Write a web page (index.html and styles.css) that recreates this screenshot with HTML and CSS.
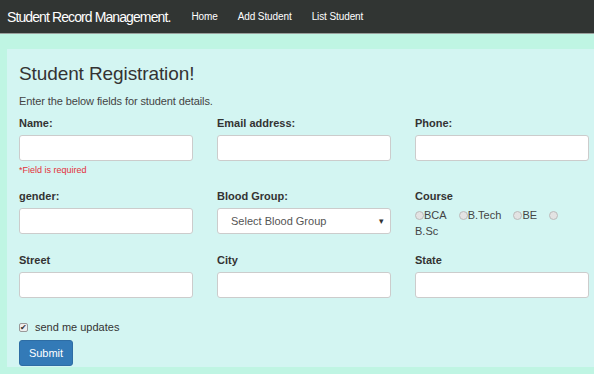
FILE: index.html
```html
<!DOCTYPE html>
<html lang="en">
<head>
    <meta charset="UTF-8">
    <meta name="viewport" content="width=device-width, initial-scale=1.0">
    <title>Student Record Management</title>
    <link rel="stylesheet" href="styles.css">
</head>
<body>
    <!-- Top navigation -->
    <nav class="navbar">
        <a class="brand" href="#">Student Record Management.</a>
        <a class="nav-link" href="#">Home</a>
        <a class="nav-link" href="#">Add Student</a>
        <a class="nav-link" href="#">List Student</a>
    </nav>

    <!-- Registration panel -->
    <div class="panel">
        <h3>Student Registration!</h3>
        <p class="lead">Enter the below fields for student details.</p>
        <form class="reg-form">
            <div class="field">
                <label>Name:</label>
                <input type="text">
                <span class="error">*Field is required</span>
            </div>
            <div class="field">
                <label>Email address:</label>
                <input type="email">
            </div>
            <div class="field">
                <label>Phone:</label>
                <input type="text">
            </div>

            <div class="field">
                <label>gender:</label>
                <input type="text">
            </div>
            <div class="field">
                <label>Blood Group:</label>
                <div class="select">
                    <span>Select Blood Group</span>
                    <span class="caret">&#9662;</span>
                </div>
            </div>
            <div class="field">
                <label>Course</label>
                <div class="radios">
                    <span class="radio"><i></i>BCA</span>
                    <span class="radio"><i></i>B.Tech</span>
                    <span class="radio"><i></i>BE</span>
                    <span class="radio"><i></i><wbr>B.Sc</span>
                </div>
            </div>

            <div class="field">
                <label>Street</label>
                <input type="text">
            </div>
            <div class="field">
                <label>City</label>
                <input type="text">
            </div>
            <div class="field">
                <label>State</label>
                <input type="text">
            </div>
        </form>
        <div class="check">
            <span class="box">&#10004;</span>
            send me updates
        </div>
        <button class="submit" type="button">Submit</button>
    </div>
</body>
</html>
```

FILE: styles.css
```css
* {
    margin: 0;
    padding: 0;
    box-sizing: border-box;
}

body {
    font-family: "Liberation Sans", Arial, sans-serif;
    background-color: #bff5e3;
    color: #333;
    overflow: hidden;
    width: 594px;
    height: 374px;
}

.navbar {
    display: flex;
    align-items: center;
    height: 34px;
    padding: 0 7px;
    background-color: #313533;
    border-bottom: 1px solid #9aa09d;
}

.navbar a {
    color: #fff;
    text-decoration: none;
}

.brand {
    font-size: 14px;
    margin-right: 21px;
    letter-spacing: -0.9px;
}

.nav-link {
    font-size: 10px;
    margin-right: 20px;
    letter-spacing: -0.1px;
}

.panel {
    margin: 15px 0 0 7px;
    width: 587px;
    height: 318px;
    padding: 14px 12px 0;
    background-color: #d3f5f2;
}

h3 {
    font-size: 19px;
    font-weight: normal;
    margin-bottom: 10px;
    letter-spacing: -0.1px;
}

.lead {
    font-size: 11px;
    color: #444;
    margin-bottom: 10px;
    letter-spacing: -0.1px;
}

.reg-form {
    display: grid;
    grid-template-columns: 174px 174px 174px;
    column-gap: 24px;
}

.field {
    padding-bottom: 20px;
}

.field label {
    display: block;
    font-size: 11px;
    font-weight: bold;
    margin-bottom: 6px;
}

.field input,
.select {
    display: block;
    width: 174px;
    height: 26px;
    background-color: #fff;
    border: 1px solid #ccc;
    border-radius: 3px;
}

.error {
    display: block;
    font-size: 9px;
    line-height: 11px;
    color: #e3303a;
    margin-top: 4px;
    margin-bottom: -6px;
}

.select {
    display: flex;
    align-items: center;
    justify-content: space-between;
    padding: 0 6px 0 13px;
    font-size: 11px;
    color: #555;
}

.caret {
    font-size: 9px;
    color: #333;
}

.radios {
    height: 26px;
    font-size: 11px;
    color: #444;
    line-height: 16px;
    margin-top: -1px;
}

.radio {
    margin-right: 9px;
}

.radio i {
    display: inline-block;
    width: 9px;
    height: 9px;
    border: 1px solid #bbb;
    border-radius: 50%;
    background-color: #e3e3e3;
    vertical-align: -1px;
}

.check {
    display: flex;
    align-items: center;
    font-size: 11px;
    margin-top: 3px;
}

.box {
    width: 9px;
    height: 9px;
    border: 1px solid #999;
    border-radius: 2px;
    background-color: #eee;
    font-size: 8px;
    line-height: 7px;
    text-align: center;
    margin-right: 7px;
}

.submit {
    margin-top: 7px;
    width: 54px;
    height: 26px;
    background-color: #337ab7;
    border: 1px solid #2e6da4;
    border-radius: 3px;
    color: #fff;
    font-family: inherit;
    font-size: 11px;
}
```
